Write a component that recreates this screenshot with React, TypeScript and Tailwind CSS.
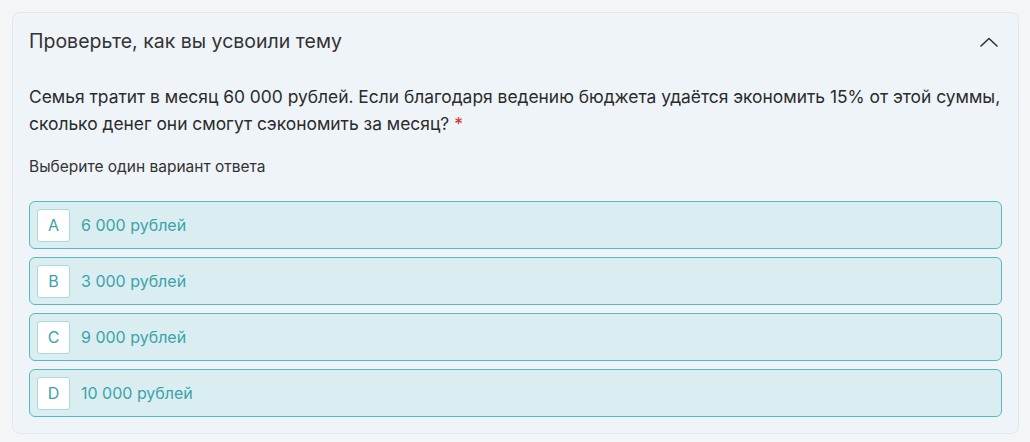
import React from "react";

const options = [
  { letter: "A", text: "6 000 рублей" },
  { letter: "B", text: "3 000 рублей" },
  { letter: "C", text: "9 000 рублей" },
  { letter: "D", text: "10 000 рублей" },
];

export default function App() {
  return (
    <div
      className="w-[1030px] h-[442px] bg-[#f4f5f7] pt-[12px] pl-[12px] pr-[11px]"
      style={{ fontFamily: "Inter, 'Noto Sans', sans-serif" }}
    >
      <div className="h-[422px] rounded-[8px] border border-[#e3e7ec] bg-[#eff4f9] pl-[16px] pr-[16px]">
        <div className="flex items-center justify-between h-[56px] pt-[1px]">
          <div className="text-[19.5px] text-[#333333] leading-none">Проверьте, как вы усвоили тему</div>
          <svg width="18" height="10" viewBox="0 0 18 10" className="mr-[4px]">
            <path d="M1 9 L9 1.5 L17 9" fill="none" stroke="#333" strokeWidth="1.6" strokeLinecap="round" strokeLinejoin="round" />
          </svg>
        </div>
        <div className="mt-[14px] -mr-[10px] text-[17.4px] leading-[27px] text-[#2b2b2b] whitespace-nowrap">
          Семья тратит в месяц 60 000 рублей. Если благодаря ведению бюджета удаётся экономить 15% от этой суммы,
          <br />
          сколько денег они смогут сэкономить за месяц?<span className="ml-[5px] text-[#e03030]">*</span>
        </div>
        <div className="mt-[20px] text-[15.5px] leading-[20px] text-[#333]">Выберите один вариант ответа</div>
        <div className="mt-[24px] flex flex-col gap-[8px]">
          {options.map((o) => (
            <div
              key={o.letter}
              className="h-[48px] rounded-[6px] border border-[#55b9bf] bg-[#daeef1] flex items-center pl-[7px]"
            >
              <div className="w-[33px] h-[33px] bg-white border border-[#a9dbde] rounded-[3px] flex items-center justify-center text-[16px] text-[#3aa3ab]">
                {o.letter}
              </div>
              <div className="ml-[11px] text-[16px] text-[#3aa3ab]">{o.text}</div>
            </div>
          ))}
        </div>
      </div>
    </div>
  );
}
